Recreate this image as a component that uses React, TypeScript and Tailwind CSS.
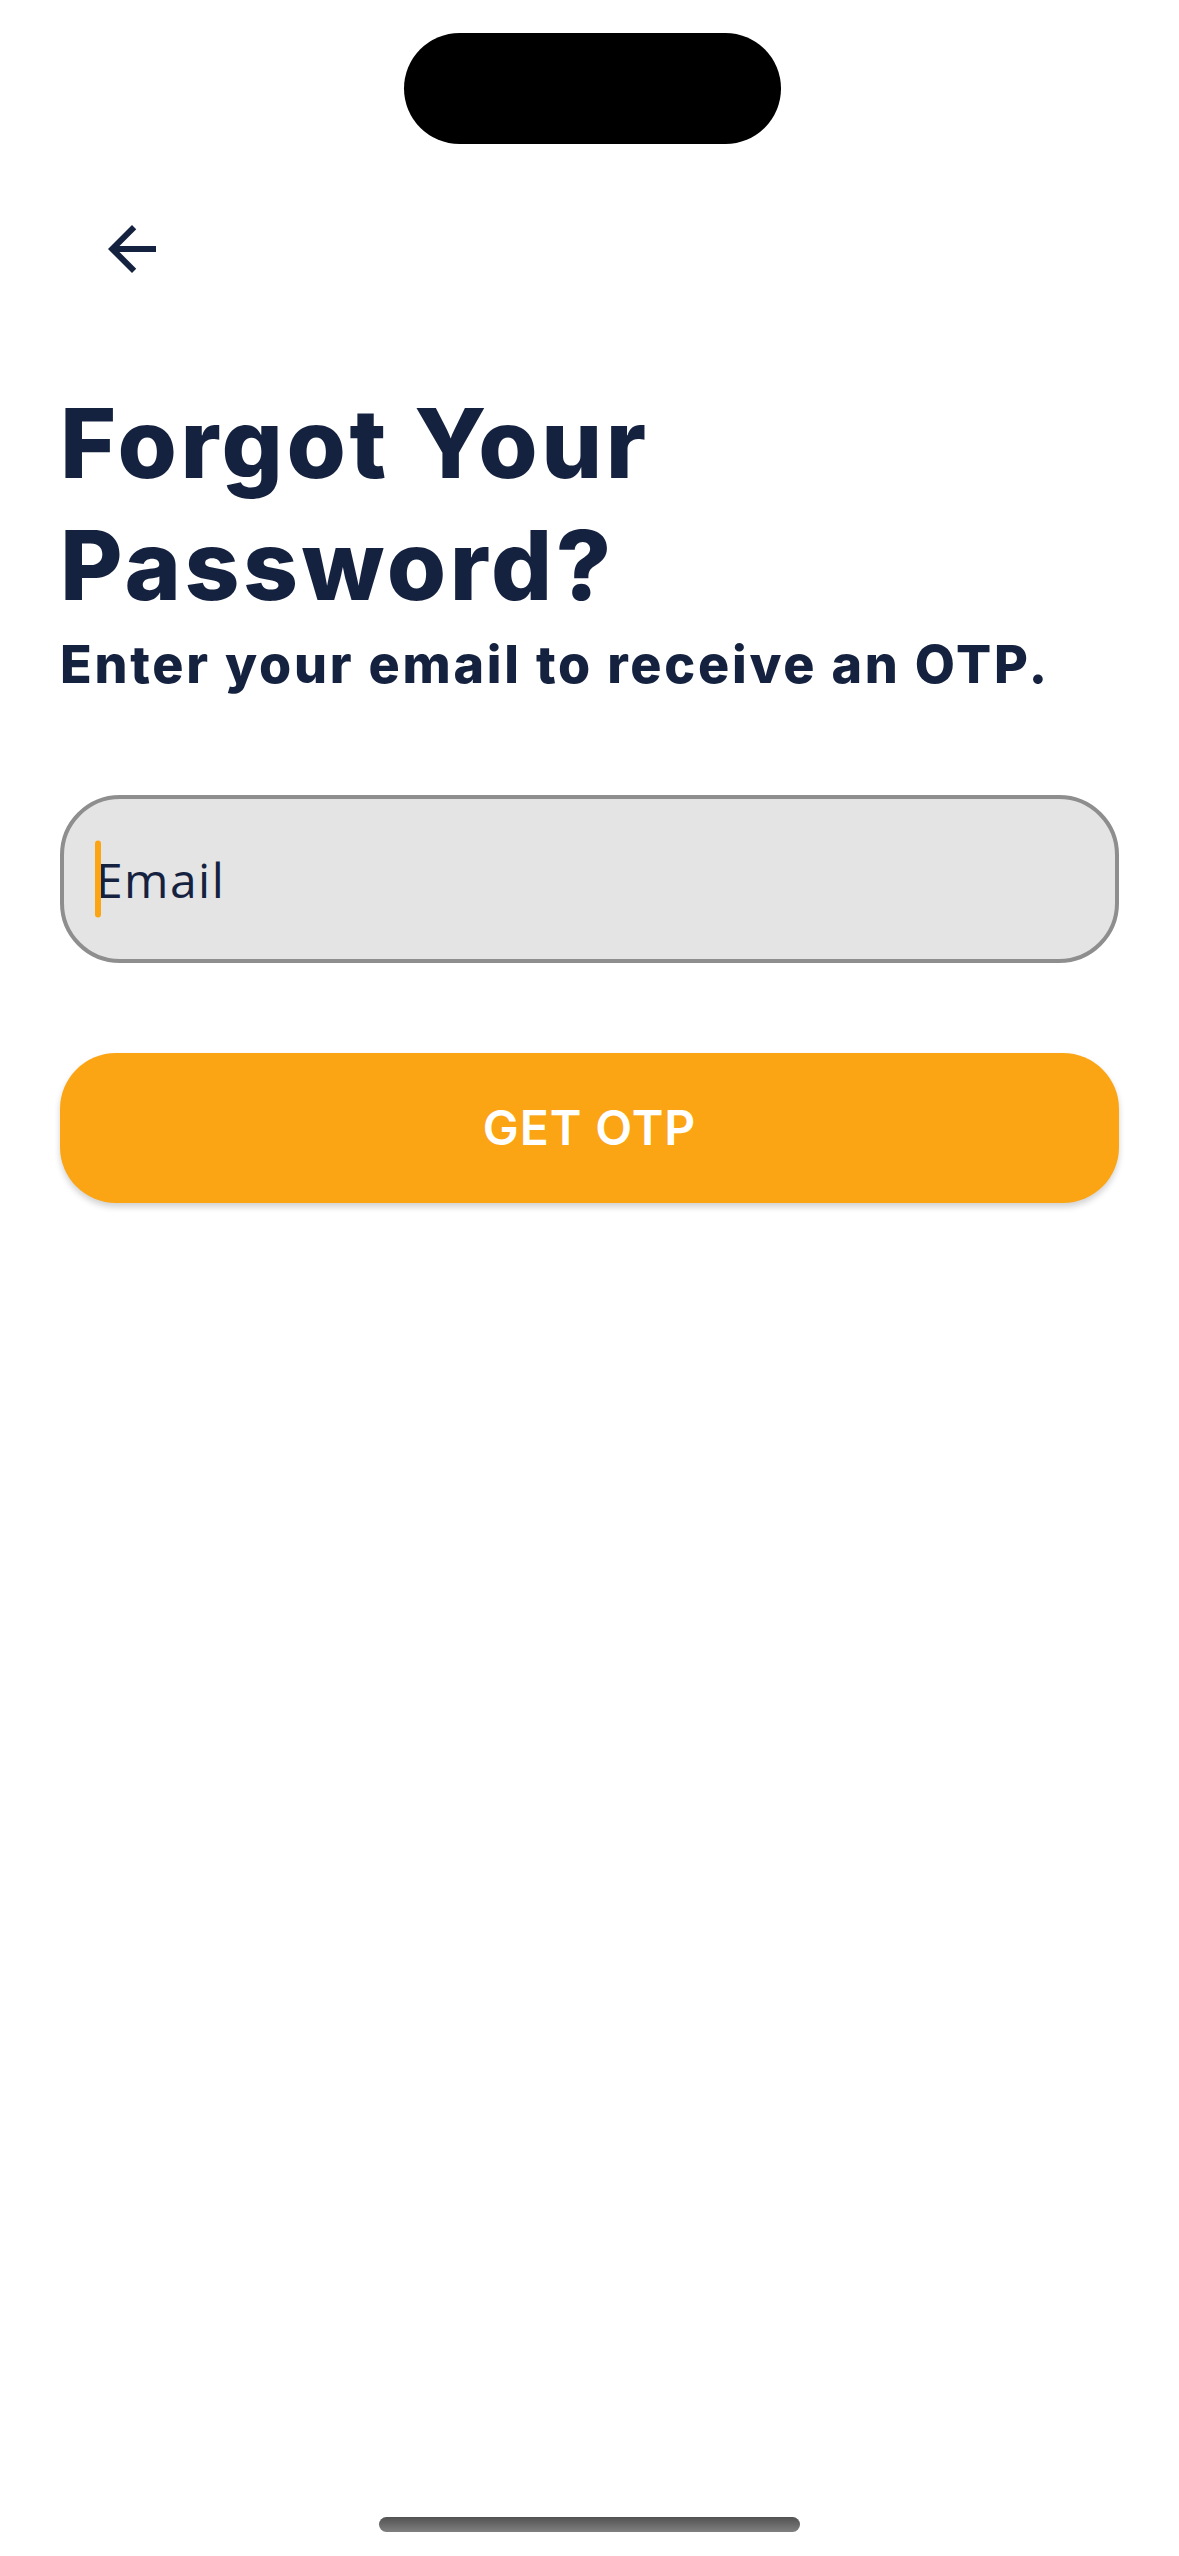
import React from 'react';

export default function App() {
  return (
    <div className="h-[2556px] w-full bg-white flex flex-col font-['Inter',sans-serif] text-[#15223f]">
      {/* status bar / dynamic island */}
      <div className="pt-[33px] flex justify-center">
        <div className="h-[111px] w-[377px] rounded-full bg-black ml-[6px]" />
      </div>

      {/* back */}
      <div className="mt-[69px] pl-[96px]">
        <button aria-label="Back" className="h-[72px] w-[72px] flex items-center justify-center">
          <svg viewBox="0 0 24 24" width="72" height="72" fill="#15223f">
            <path d="M20 11H7.83l5.59-5.59L12 4l-8 8 8 8 1.41-1.41L7.83 13H20v-2z" />
          </svg>
        </button>
      </div>

      <div className="px-[60px] flex flex-col">
        <h1 className="mt-[97px] text-[96px] leading-[122px] font-extrabold tracking-[0.037em]">
          Forgot Your
          <br />
          Password?
        </h1>
        <p className="mt-[7px] text-[52px] leading-[64px] font-extrabold tracking-[0.053em]">
          Enter your email to receive an OTP.
        </p>

        {/* email field */}
        <div className="mt-[98px] h-[168px] w-full rounded-[60px] border-[4px] border-[#8e8e8e] bg-[#e4e4e4] flex items-center pl-[32px]">
          <div className="relative flex items-center">
            <span className="absolute left-[-1px] top-1/2 -translate-y-1/2 h-[77px] w-[6px] rounded-full bg-[#fba515]" />
            <span className="font-['Open_Sans',sans-serif] text-[48px] leading-[65px] tracking-[0.03em] text-[#15223f]">Email</span>
          </div>
        </div>

        {/* button */}
        <button className="mt-[90px] h-[150px] w-full rounded-[56px] bg-[#fba515] shadow-[0_4px_6px_rgba(0,0,0,0.18)] flex items-center justify-center">
          <span className="text-white text-[48px] font-semibold tracking-[0.02em]">GET OTP</span>
        </button>
      </div>

      {/* home indicator */}
      <div className="mt-auto mb-[24px] flex justify-center">
        <div className="h-[15px] w-[421px] rounded-full bg-gradient-to-b from-[#525252] to-[#808080]" />
      </div>
    </div>
  );
}
